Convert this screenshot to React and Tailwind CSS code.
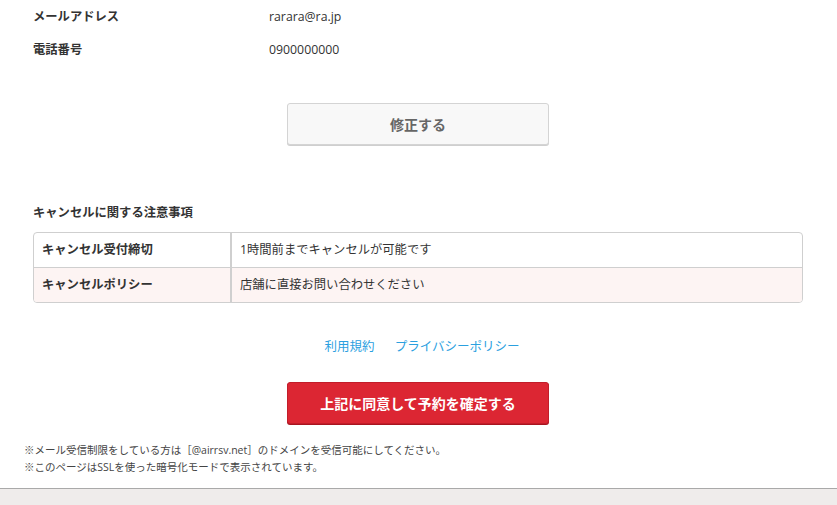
import React from "react";

const font = { fontFamily: '"Open Sans", "Noto Sans CJK JP", sans-serif' };

const App = () => {
    return (
        <div className="min-h-[505px] bg-white flex flex-col text-[#333]" style={font}>
            <div className="pl-[33px] pr-[34px] flex-1">
                {/* Contact info */}
                <dl className="text-[12.3px] pt-[1px]">
                    <div className="flex items-center h-[32px]">
                        <dt className="w-[236px] font-bold">メールアドレス</dt>
                        <dd>rarara@ra.jp</dd>
                    </div>
                    <div className="flex items-center h-[35px]">
                        <dt className="w-[236px] font-bold">電話番号</dt>
                        <dd>0900000000</dd>
                    </div>
                </dl>

                <div className="flex justify-center mt-[35px]">
                    <button className="w-[262px] h-[42px] rounded-[3px] bg-[#f8f8f8] border border-[#d4d4d4] shadow-[0_1px_0_#cfcfcf] text-[14px] font-bold text-[#666]">
                        修正する
                    </button>
                </div>

                {/* Cancel policy */}
                <h2 className="mt-[59px] text-[12.3px] font-bold leading-[18px]">キャンセルに関する注意事項</h2>
                <div className="mt-[10px] border border-[#cfcfcf] rounded-[4px] overflow-hidden text-[12.3px]">
                    <div className="flex h-[35px] border-b border-[#cfcfcf]">
                        <div className="w-[198px] flex items-center pl-[8px] font-bold border-r-2 border-[#cfcfcf]">キャンセル受付締切</div>
                        <div className="flex-1 flex items-center pl-[8px]">1時間前までキャンセルが可能です</div>
                    </div>
                    <div className="flex h-[34px] bg-[#fdf4f3]">
                        <div className="w-[198px] flex items-center pl-[8px] font-bold border-r-2 border-[#cfcfcf]">キャンセルポリシー</div>
                        <div className="flex-1 flex items-center pl-[8px]">店舗に直接お問い合わせください</div>
                    </div>
                </div>

                {/* Links */}
                <div className="mt-[35px] pl-[8px] flex justify-center gap-[20px] text-[12.5px] text-[#2ba0df] leading-[18px]">
                    <a href="#">利用規約</a>
                    <a href="#">プライバシーポリシー</a>
                </div>

                <div className="flex justify-center mt-[26px]">
                    <button className="w-[262px] h-[42px] rounded-[3px] bg-[#dc2633] border border-[#c21d2a] shadow-[0_1px_0_#a8141f] text-[14px] font-bold text-white">
                        上記に同意して予約を確定する
                    </button>
                </div>
            </div>

            <div className="px-[24px] mt-[16px] text-[10.5px] leading-[17px] text-[#444]">
                <p>※メール受信制限をしている方は［@airrsv.net］のドメインを受信可能にしてください。</p>
                <p>※このページはSSLを使った暗号化モードで表示されています。</p>
            </div>

            <div className="mt-[12px] h-[17px] border-t border-[#a9a9a9] bg-[#efeceb]"></div>
        </div>
    );
};

export default App;
